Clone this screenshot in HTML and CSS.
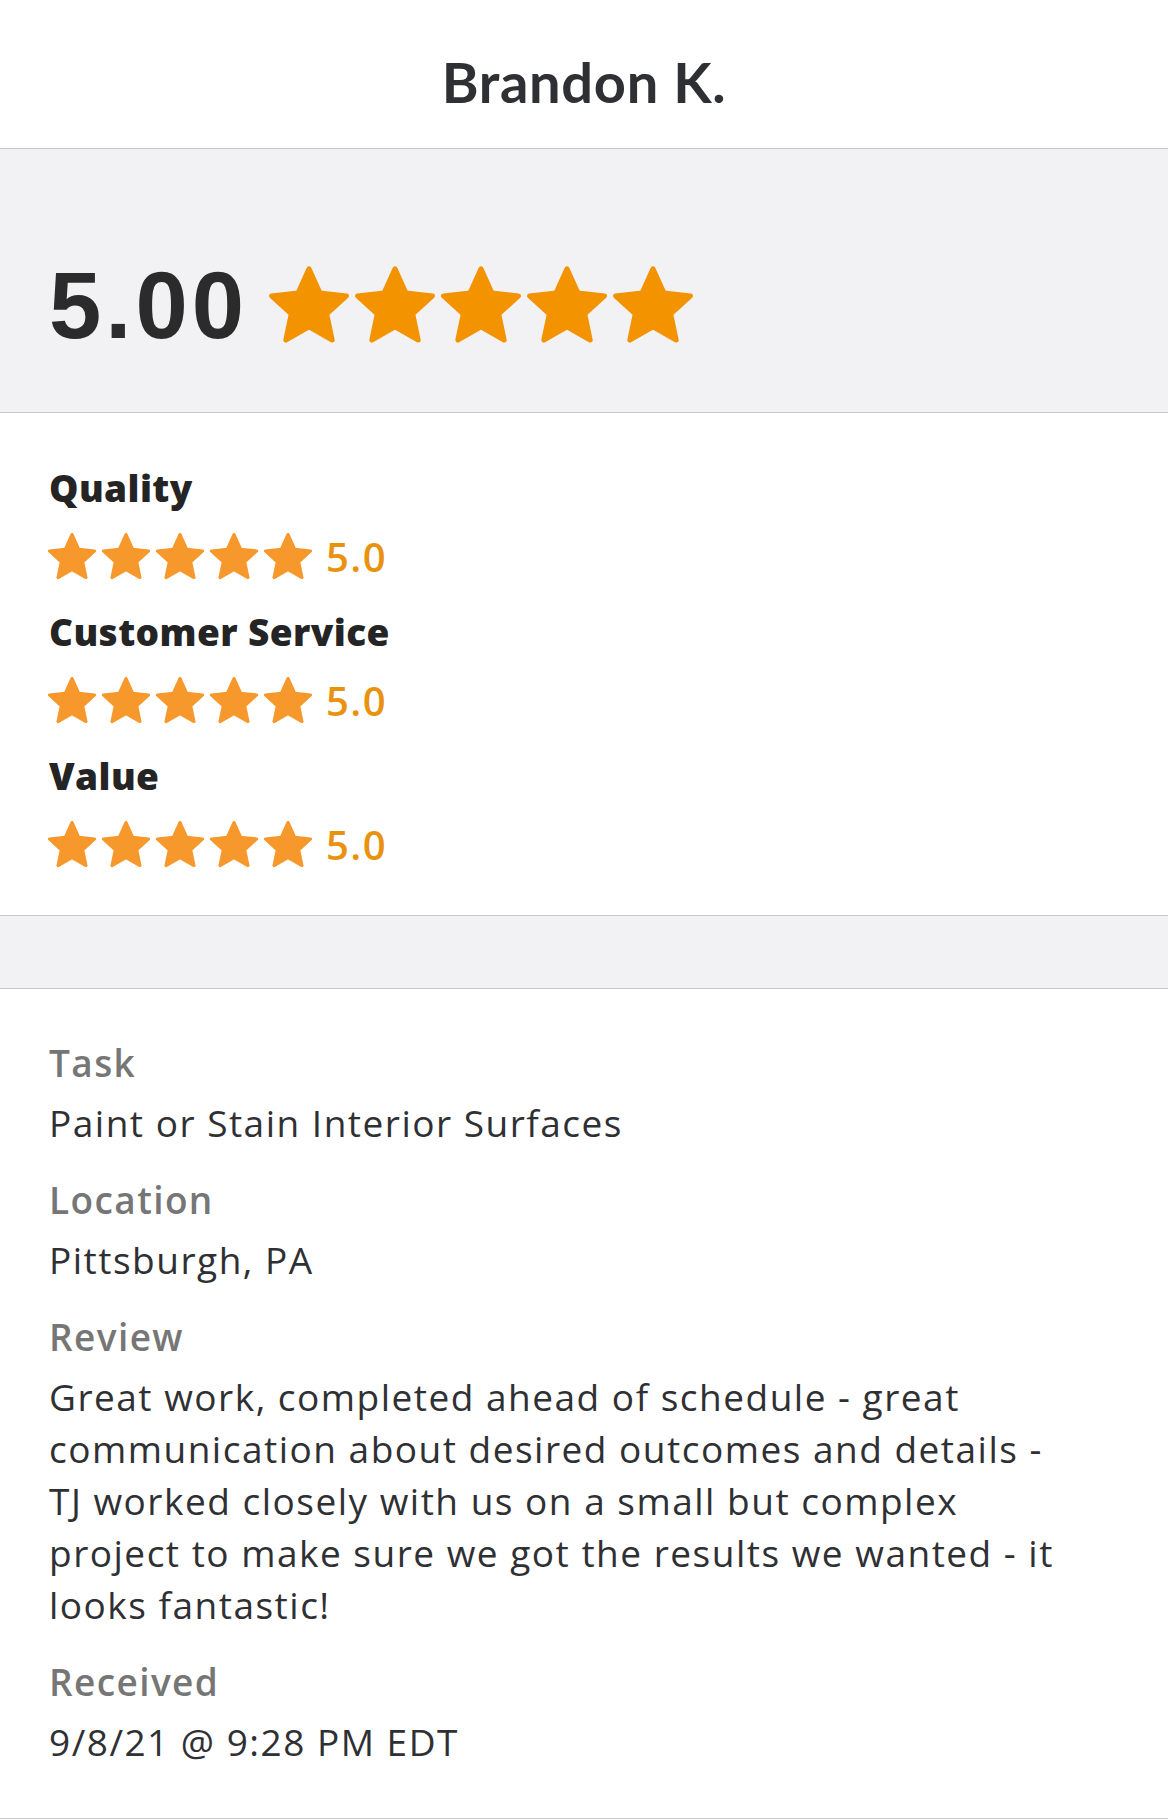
FILE: index.html
```html
<!DOCTYPE html>
<html lang="en">
<head>
<meta charset="utf-8">
<title>Brandon K. review</title>
<link rel="stylesheet" href="styles.css">
</head>
<body>
<header class="top">
  <h1 class="name">Brandon K.</h1>
</header>

<section class="overall">
  <span class="score">5.00</span>
  <div class="stars stars-lg">
    <svg class="star" viewBox="0 0 24 24"><path d="M12 1.6L15.06 8.39L22.46 9.2L16.95 14.21L18.47 21.5L12 17.8L5.53 21.5L7.05 14.21L1.54 9.2L8.94 8.39Z"/></svg>
    <svg class="star" viewBox="0 0 24 24"><path d="M12 1.6L15.06 8.39L22.46 9.2L16.95 14.21L18.47 21.5L12 17.8L5.53 21.5L7.05 14.21L1.54 9.2L8.94 8.39Z"/></svg>
    <svg class="star" viewBox="0 0 24 24"><path d="M12 1.6L15.06 8.39L22.46 9.2L16.95 14.21L18.47 21.5L12 17.8L5.53 21.5L7.05 14.21L1.54 9.2L8.94 8.39Z"/></svg>
    <svg class="star" viewBox="0 0 24 24"><path d="M12 1.6L15.06 8.39L22.46 9.2L16.95 14.21L18.47 21.5L12 17.8L5.53 21.5L7.05 14.21L1.54 9.2L8.94 8.39Z"/></svg>
    <svg class="star" viewBox="0 0 24 24"><path d="M12 1.6L15.06 8.39L22.46 9.2L16.95 14.21L18.47 21.5L12 17.8L5.53 21.5L7.05 14.21L1.54 9.2L8.94 8.39Z"/></svg>
  </div>
</section>

<section class="categories">
  <div class="cat">
    <h2 class="cat-label">Quality</h2>
    <div class="cat-rating">
      <div class="stars stars-sm">
        <svg class="star" viewBox="0 0 24 24"><path d="M12 1.6L15.06 8.39L22.46 9.2L16.95 14.21L18.47 21.5L12 17.8L5.53 21.5L7.05 14.21L1.54 9.2L8.94 8.39Z"/></svg>
        <svg class="star" viewBox="0 0 24 24"><path d="M12 1.6L15.06 8.39L22.46 9.2L16.95 14.21L18.47 21.5L12 17.8L5.53 21.5L7.05 14.21L1.54 9.2L8.94 8.39Z"/></svg>
        <svg class="star" viewBox="0 0 24 24"><path d="M12 1.6L15.06 8.39L22.46 9.2L16.95 14.21L18.47 21.5L12 17.8L5.53 21.5L7.05 14.21L1.54 9.2L8.94 8.39Z"/></svg>
        <svg class="star" viewBox="0 0 24 24"><path d="M12 1.6L15.06 8.39L22.46 9.2L16.95 14.21L18.47 21.5L12 17.8L5.53 21.5L7.05 14.21L1.54 9.2L8.94 8.39Z"/></svg>
        <svg class="star" viewBox="0 0 24 24"><path d="M12 1.6L15.06 8.39L22.46 9.2L16.95 14.21L18.47 21.5L12 17.8L5.53 21.5L7.05 14.21L1.54 9.2L8.94 8.39Z"/></svg>
      </div>
      <span class="cat-score">5.0</span>
    </div>
  </div>
  <div class="cat">
    <h2 class="cat-label">Customer Service</h2>
    <div class="cat-rating">
      <div class="stars stars-sm">
        <svg class="star" viewBox="0 0 24 24"><path d="M12 1.6L15.06 8.39L22.46 9.2L16.95 14.21L18.47 21.5L12 17.8L5.53 21.5L7.05 14.21L1.54 9.2L8.94 8.39Z"/></svg>
        <svg class="star" viewBox="0 0 24 24"><path d="M12 1.6L15.06 8.39L22.46 9.2L16.95 14.21L18.47 21.5L12 17.8L5.53 21.5L7.05 14.21L1.54 9.2L8.94 8.39Z"/></svg>
        <svg class="star" viewBox="0 0 24 24"><path d="M12 1.6L15.06 8.39L22.46 9.2L16.95 14.21L18.47 21.5L12 17.8L5.53 21.5L7.05 14.21L1.54 9.2L8.94 8.39Z"/></svg>
        <svg class="star" viewBox="0 0 24 24"><path d="M12 1.6L15.06 8.39L22.46 9.2L16.95 14.21L18.47 21.5L12 17.8L5.53 21.5L7.05 14.21L1.54 9.2L8.94 8.39Z"/></svg>
        <svg class="star" viewBox="0 0 24 24"><path d="M12 1.6L15.06 8.39L22.46 9.2L16.95 14.21L18.47 21.5L12 17.8L5.53 21.5L7.05 14.21L1.54 9.2L8.94 8.39Z"/></svg>
      </div>
      <span class="cat-score">5.0</span>
    </div>
  </div>
  <div class="cat">
    <h2 class="cat-label">Value</h2>
    <div class="cat-rating">
      <div class="stars stars-sm">
        <svg class="star" viewBox="0 0 24 24"><path d="M12 1.6L15.06 8.39L22.46 9.2L16.95 14.21L18.47 21.5L12 17.8L5.53 21.5L7.05 14.21L1.54 9.2L8.94 8.39Z"/></svg>
        <svg class="star" viewBox="0 0 24 24"><path d="M12 1.6L15.06 8.39L22.46 9.2L16.95 14.21L18.47 21.5L12 17.8L5.53 21.5L7.05 14.21L1.54 9.2L8.94 8.39Z"/></svg>
        <svg class="star" viewBox="0 0 24 24"><path d="M12 1.6L15.06 8.39L22.46 9.2L16.95 14.21L18.47 21.5L12 17.8L5.53 21.5L7.05 14.21L1.54 9.2L8.94 8.39Z"/></svg>
        <svg class="star" viewBox="0 0 24 24"><path d="M12 1.6L15.06 8.39L22.46 9.2L16.95 14.21L18.47 21.5L12 17.8L5.53 21.5L7.05 14.21L1.54 9.2L8.94 8.39Z"/></svg>
        <svg class="star" viewBox="0 0 24 24"><path d="M12 1.6L15.06 8.39L22.46 9.2L16.95 14.21L18.47 21.5L12 17.8L5.53 21.5L7.05 14.21L1.54 9.2L8.94 8.39Z"/></svg>
      </div>
      <span class="cat-score">5.0</span>
    </div>
  </div>
</section>

<div class="spacer"></div>

<section class="details">
  <dl class="info">
    <div class="item">
      <dt class="label">Task</dt>
      <dd class="value">Paint or Stain Interior Surfaces</dd>
    </div>
    <div class="item">
      <dt class="label">Location</dt>
      <dd class="value">Pittsburgh, PA</dd>
    </div>
    <div class="item">
      <dt class="label">Review</dt>
      <dd class="value review">Great work, completed ahead of schedule - great communication about desired outcomes and details - TJ worked closely with us on a small but complex project to make sure we got the results we wanted - it looks fantastic!</dd>
    </div>
    <div class="item">
      <dt class="label">Received</dt>
      <dd class="value">9/8/21 @ 9:28 PM EDT</dd>
    </div>
  </dl>
</section>
</body>
</html>
```

FILE: styles.css
```css
* { box-sizing: border-box; }

body {
  margin: 0;
  background: #ffffff;
  color: #2f3033;
  font-family: "Open Sans", "Liberation Sans", sans-serif;
}

.top {
  padding: 48px 0 33px;
  border-bottom: 1px solid #c6c6c8;
  text-align: center;
}

.name {
  margin: 0;
  font-family: Lato, "Liberation Sans", sans-serif;
  font-weight: 700;
  font-size: 56px;
  line-height: 67px;
  letter-spacing: 0.7px;
  color: #2f3033;
}

.overall {
  display: flex;
  align-items: center;
  gap: 18px;
  padding: 110px 49px 59px;
  background: #f2f2f5;
  border-bottom: 1px solid #c9c9cb;
}

.score {
  font-family: "Liberation Sans", Arial, sans-serif;
  font-weight: 700;
  font-size: 94px;
  line-height: 94px;
  letter-spacing: 4px;
  color: #2b2b2b;
}

.stars {
  display: flex;
}

.star {
  display: block;
  fill: currentColor;
  stroke: currentColor;
  stroke-width: 1.4;
  stroke-linejoin: round;
}

.stars-lg { color: #f39300; }
.stars-lg .star { width: 86px; height: 86px; }

.stars-sm { color: #f6982b; gap: 2px; margin-left: -3px; }
.stars-sm .star { width: 52px; height: 52px; }

.categories {
  display: flex;
  flex-direction: column;
  gap: 26px;
  padding: 53px 49px 43px;
  border-bottom: 1px solid #c9c9cb;
}

.cat-label {
  margin: 0;
  font-family: "Open Sans", "Liberation Sans", sans-serif;
  font-weight: 800;
  font-size: 37px;
  line-height: 44px;
  letter-spacing: 0.4px;
  color: #242424;
}

.cat-rating {
  display: flex;
  align-items: center;
  gap: 12px;
  margin-top: 20px;
  height: 54px;
}

.cat-score {
  font-family: "Open Sans", "Liberation Sans", sans-serif;
  font-weight: 600;
  font-size: 40px;
  line-height: 54px;
  letter-spacing: 1.5px;
  color: #e9920f;
}

.spacer {
  height: 73px;
  background: #f2f2f5;
  border-bottom: 1px solid #c9c9cb;
}

.details {
  padding: 48px 49px 50px;
  border-bottom: 1px solid #c9c9cb;
}

.info {
  display: flex;
  flex-direction: column;
  gap: 25px;
  margin: 0;
  max-width: 1030px;
}

.label {
  font-size: 37px;
  line-height: 52px;
  font-weight: 600;
  letter-spacing: 1.4px;
  color: #767676;
}

.value {
  margin: 8px 0 0;
  font-size: 37px;
  line-height: 52px;
  font-weight: 400;
  letter-spacing: 1.5px;
  color: #2f3033;
}
```
